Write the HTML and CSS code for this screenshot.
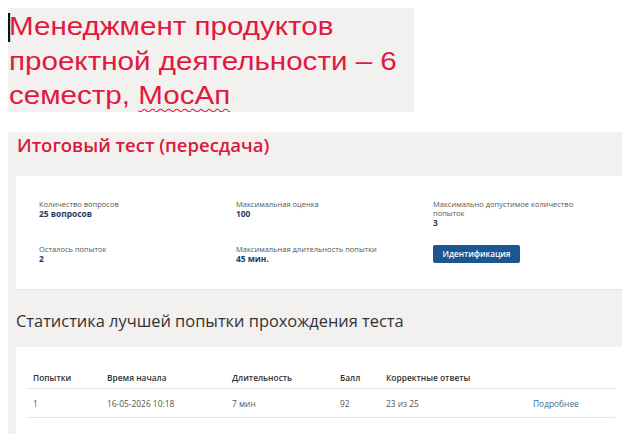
FILE: index.html
```html
<!DOCTYPE html>
<html lang="ru">
<head>
<meta charset="utf-8">
<title>Итоговый тест (пересдача)</title>
<link rel="stylesheet" href="styles.css">
</head>
<body>
<div class="doc-title">
  <div class="doc-text"><span class="caret"></span>Менеджмент продуктов проектной деятельности – 6 семестр, <span class="spell">МосАп</span></div>
</div>

<div class="panel">
  <h1 class="test-title">Итоговый тест (пересдача)</h1>
  <div class="card info-card">
    <div class="info-grid">
      <div class="info-item">
        <div class="info-label">Количество вопросов</div>
        <div class="info-value">25 вопросов</div>
      </div>
      <div class="info-item">
        <div class="info-label">Максимальная оценка</div>
        <div class="info-value">100</div>
      </div>
      <div class="info-item">
        <div class="info-label">Максимально допустимое количество попыток</div>
        <div class="info-value">3</div>
      </div>
      <div class="info-item">
        <div class="info-label">Осталось попыток</div>
        <div class="info-value">2</div>
      </div>
      <div class="info-item">
        <div class="info-label">Максимальная длительность попытки</div>
        <div class="info-value">45 мин.</div>
      </div>
      <div class="info-item">
        <button class="btn-primary" type="button">Идентификация</button>
      </div>
    </div>
  </div>

  <h2 class="stats-title">Статистика лучшей попытки прохождения теста</h2>
  <div class="card stats-card">
    <table class="stats-table">
      <thead>
        <tr>
          <th class="c1">Попытки</th>
          <th class="c2">Время начала</th>
          <th class="c3">Длительность</th>
          <th class="c4">Балл</th>
          <th class="c5">Корректные ответы</th>
          <th class="c6"></th>
        </tr>
      </thead>
      <tbody>
        <tr>
          <td>1</td>
          <td>16-05-2026 10:18</td>
          <td>7 мин</td>
          <td>92</td>
          <td>23 из 25</td>
          <td><a class="more-link" href="#">Подробнее</a></td>
        </tr>
      </tbody>
    </table>
  </div>
</div>
</body>
</html>
```

FILE: styles.css
```css
html, body {
  margin: 0;
  padding: 0;
  background: #ffffff;
}
body {
  margin: 8px;
  overflow: hidden;
}

.doc-title {
  width: 405px;
  height: 103px;
  padding: 1px 0 0 1px;
  background: #f2f1ef;
  overflow: hidden;
}
.doc-text {
  width: 348px;
  transform: scaleX(1.16);
  transform-origin: left top;
  font-family: "Liberation Sans", Arial, sans-serif;
  font-size: 25.5px;
  line-height: 34.5px;
  color: #e2183e;
}
.caret {
  display: inline-block;
  width: 2px;
  height: 29px;
  background: #111;
  vertical-align: -7px;
  margin-left: -1px;
  margin-right: -1px;
}
.spell {
  text-decoration: underline wavy #e2183e;
  text-decoration-thickness: 1px;
  text-underline-offset: 4px;
}

.panel {
  width: 618px;
  margin-top: 20px;
  background: #f2f1ef;
  font-family: "Open Sans", sans-serif;
  padding-bottom: 40px;
}

.test-title {
  margin: 0 0 18px 9px;
  font-size: 18.5px;
  font-weight: 600;
  line-height: 26px;
  color: #d8193b;
}

.card {
  background: #ffffff;
  margin: 0 2px 0 8px;
  box-shadow: 0 1px 1px rgba(0, 0, 0, 0.05);
}

.info-card {
  padding: 24px 23px 25px;
}
.info-grid {
  display: grid;
  grid-template-columns: repeat(3, 168px);
  column-gap: 29px;
  row-gap: 17px;
}
.info-label {
  font-size: 7.5px;
  line-height: 9px;
  color: #555555;
}
.info-value {
  font-size: 8.4px;
  line-height: 10px;
  font-weight: 700;
  color: #1f3b63;
}
.btn-primary {
  display: block;
  width: 87px;
  height: 18px;
  padding: 0;
  border: none;
  border-radius: 2px;
  background: #1b5592;
  color: #ffffff;
  font-family: "Open Sans", sans-serif;
  font-size: 8.2px;
  font-weight: 600;
  line-height: 18px;
  text-align: center;
}

.stats-title {
  margin: 20px 0 15px 8px;
  font-size: 16.4px;
  font-weight: 400;
  line-height: 23px;
  color: #333333;
}

.stats-card {
  padding: 19px 9px 40px 10px;
}
.stats-table {
  width: 589px;
  border-collapse: collapse;
  table-layout: fixed;
  font-size: 8.4px;
  line-height: 11px;
}
.stats-table th,
.stats-table td {
  box-sizing: border-box;
  text-align: left;
  border-bottom: 1px solid #e6e6e6;
}
.stats-table th {
  font-weight: 600;
  color: #333333;
  padding: 6px 7px 5px;
}
.stats-table td {
  color: #555555;
  padding: 9px 7px 8px;
}
.c1 { width: 74px; }
.c2 { width: 125px; }
.c3 { width: 108px; }
.c4 { width: 46px; }
.c5 { width: 147px; }
.c6 { width: auto; }
.more-link {
  color: #3f6995;
  text-decoration: none;
}
```
